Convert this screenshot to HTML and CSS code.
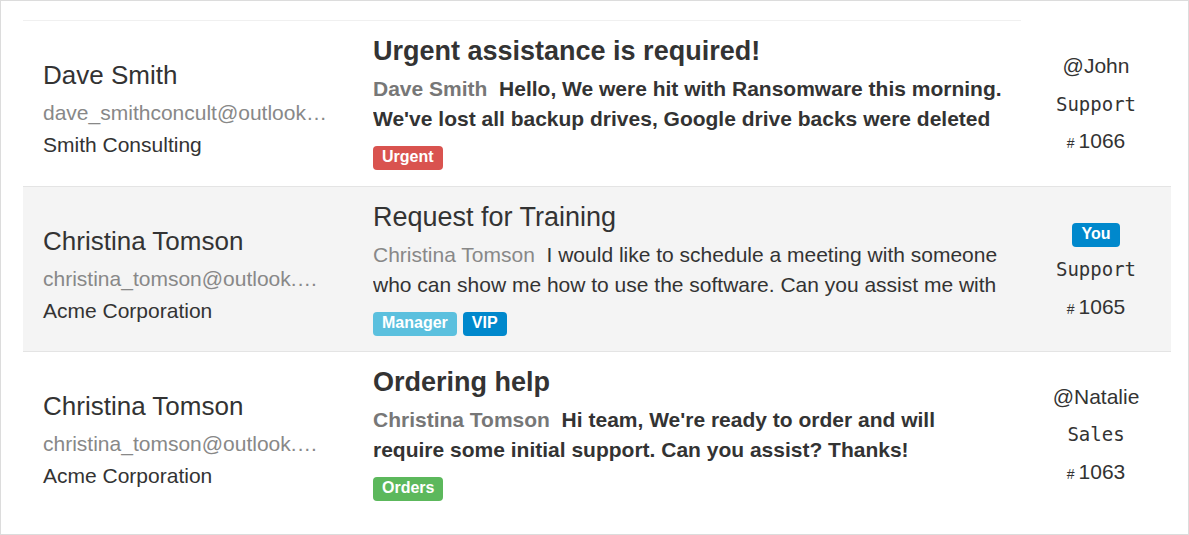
FILE: index.html
```html
<!DOCTYPE html>
<html lang="en">
<head>
<meta charset="utf-8">
<title>Tickets</title>
<link rel="stylesheet" href="styles.css">
</head>
<body>
<div class="frame">
  <table class="tickets">
    <colgroup>
      <col class="c-contact">
      <col class="c-subject">
      <col class="c-meta">
    </colgroup>
    <tbody>
      <tr class="ticket unread first">
        <td class="contact">
          <div class="name">Dave Smith</div>
          <div class="email">dave_smithconcult@outlook.com</div>
          <div class="company">Smith Consulting</div>
        </td>
        <td class="summary">
          <div class="subject">Urgent assistance is required!</div>
          <div class="message"><span class="sender">Dave Smith</span>&nbsp; Hello, We were hit with Ransomware this morning. We've lost all backup drives, Google drive backs were deleted</div>
          <div class="tags"><span class="tag tag-urgent">Urgent</span></div>
        </td>
        <td class="meta">
          <div class="meta-stack">
            <div class="meta-line assignee">@John</div>
            <div class="meta-line queue">Support</div>
            <div class="meta-line number"><span class="hash">#</span>1066</div>
          </div>
        </td>
      </tr>
      <tr class="ticket read">
        <td class="contact">
          <div class="name">Christina Tomson</div>
          <div class="email">christina_tomson@outlook.com</div>
          <div class="company">Acme Corporation</div>
        </td>
        <td class="summary">
          <div class="subject">Request for Training</div>
          <div class="message"><span class="sender">Christina Tomson</span>&nbsp; I would like to schedule a meeting with someone who can show me how to use the software. Can you assist me with this?</div>
          <div class="tags"><span class="tag tag-manager">Manager</span><span class="tag tag-vip">VIP</span></div>
        </td>
        <td class="meta">
          <div class="meta-stack">
            <div class="meta-line"><span class="tag tag-you">You</span></div>
            <div class="meta-line queue">Support</div>
            <div class="meta-line number"><span class="hash">#</span>1065</div>
          </div>
        </td>
      </tr>
      <tr class="ticket unread">
        <td class="contact">
          <div class="name">Christina Tomson</div>
          <div class="email">christina_tomson@outlook.com</div>
          <div class="company">Acme Corporation</div>
        </td>
        <td class="summary">
          <div class="subject">Ordering help</div>
          <div class="message"><span class="sender">Christina Tomson</span>&nbsp; Hi team, We're ready to order and will require some initial support. Can you assist? Thanks!</div>
          <div class="tags"><span class="tag tag-orders">Orders</span></div>
        </td>
        <td class="meta">
          <div class="meta-stack">
            <div class="meta-line assignee">@Natalie</div>
            <div class="meta-line queue">Sales</div>
            <div class="meta-line number"><span class="hash">#</span>1063</div>
          </div>
        </td>
      </tr>
    </tbody>
  </table>
</div>
</body>
</html>
```

FILE: styles.css
```css
* {
  box-sizing: border-box;
}

html, body {
  margin: 0;
  padding: 0;
  background: #ffffff;
}

body {
  font-family: "Liberation Sans", Arial, sans-serif;
  color: #333333;
  font-size: 21px;
  line-height: 30px;
}

.frame {
  width: 1189px;
  height: 535px;
  border: 1px solid #dcdcdc;
  padding: 19px 0 0 22px;
  overflow: hidden;
}

.tickets {
  width: 1148px;
  table-layout: fixed;
  border-collapse: separate;
  border-spacing: 0;
}

.c-contact { width: 330px; }
.c-subject { width: 668px; }
.c-meta { width: 150px; }

.tickets td {
  border-top: 1px solid #e4e4e4;
}

.ticket.first td {
  border-top-color: #f0f0f0;
}

.ticket.first td.meta {
  border-top-color: transparent;
}

.ticket.read td {
  background: #f4f4f4;
}

/* contact column */
.contact {
  vertical-align: top;
  padding: 39px 25.5px 0 20px;
}

.name {
  font-size: 26px;
  line-height: 30px;
  color: #333333;
}

.email {
  margin-top: 8px;
  color: #888888;
  white-space: nowrap;
  overflow: hidden;
  text-overflow: ellipsis;
}

.company {
  margin-top: 2px;
  color: #333333;
}

/* subject column */
.summary {
  vertical-align: top;
  padding: 15px 16px 15px 20px;
}

.ticket.first .summary {
  padding-bottom: 16px;
}

.subject {
  font-size: 27px;
  line-height: 30px;
}

.message {
  margin-top: 8px;
  max-height: 60px;
  overflow: hidden;
}

.sender {
  color: #777777;
}

.unread .subject,
.unread .message {
  font-weight: bold;
}

.read .sender {
  color: #888888;
}

.tags {
  display: flex;
  gap: 6px;
  margin-top: 12px;
}

.tag {
  display: inline-block;
  font-size: 16px;
  line-height: 16px;
  font-weight: bold;
  color: #ffffff;
  padding: 3px 9px 5px;
  border-radius: 4px;
  white-space: nowrap;
}

.tag-urgent { background: #d9534f; }
.tag-manager { background: #5bc0de; }
.tag-vip { background: #0088cc; }
.tag-you { background: #0088cc; }
.tag-orders { background: #5cb85c; }

/* meta column */
.meta {
  vertical-align: middle;
  text-align: center;
  padding: 0;
}

.meta-stack {
  display: flex;
  flex-direction: column;
  align-items: center;
  gap: 7.5px;
}

.meta-line {
  line-height: 30px;
  height: 30px;
}

.queue {
  font-family: "DejaVu Sans Mono", "Liberation Mono", monospace;
  font-size: 19px;
}

.hash {
  font-size: 14px;
  margin-right: 4px;
}
```
